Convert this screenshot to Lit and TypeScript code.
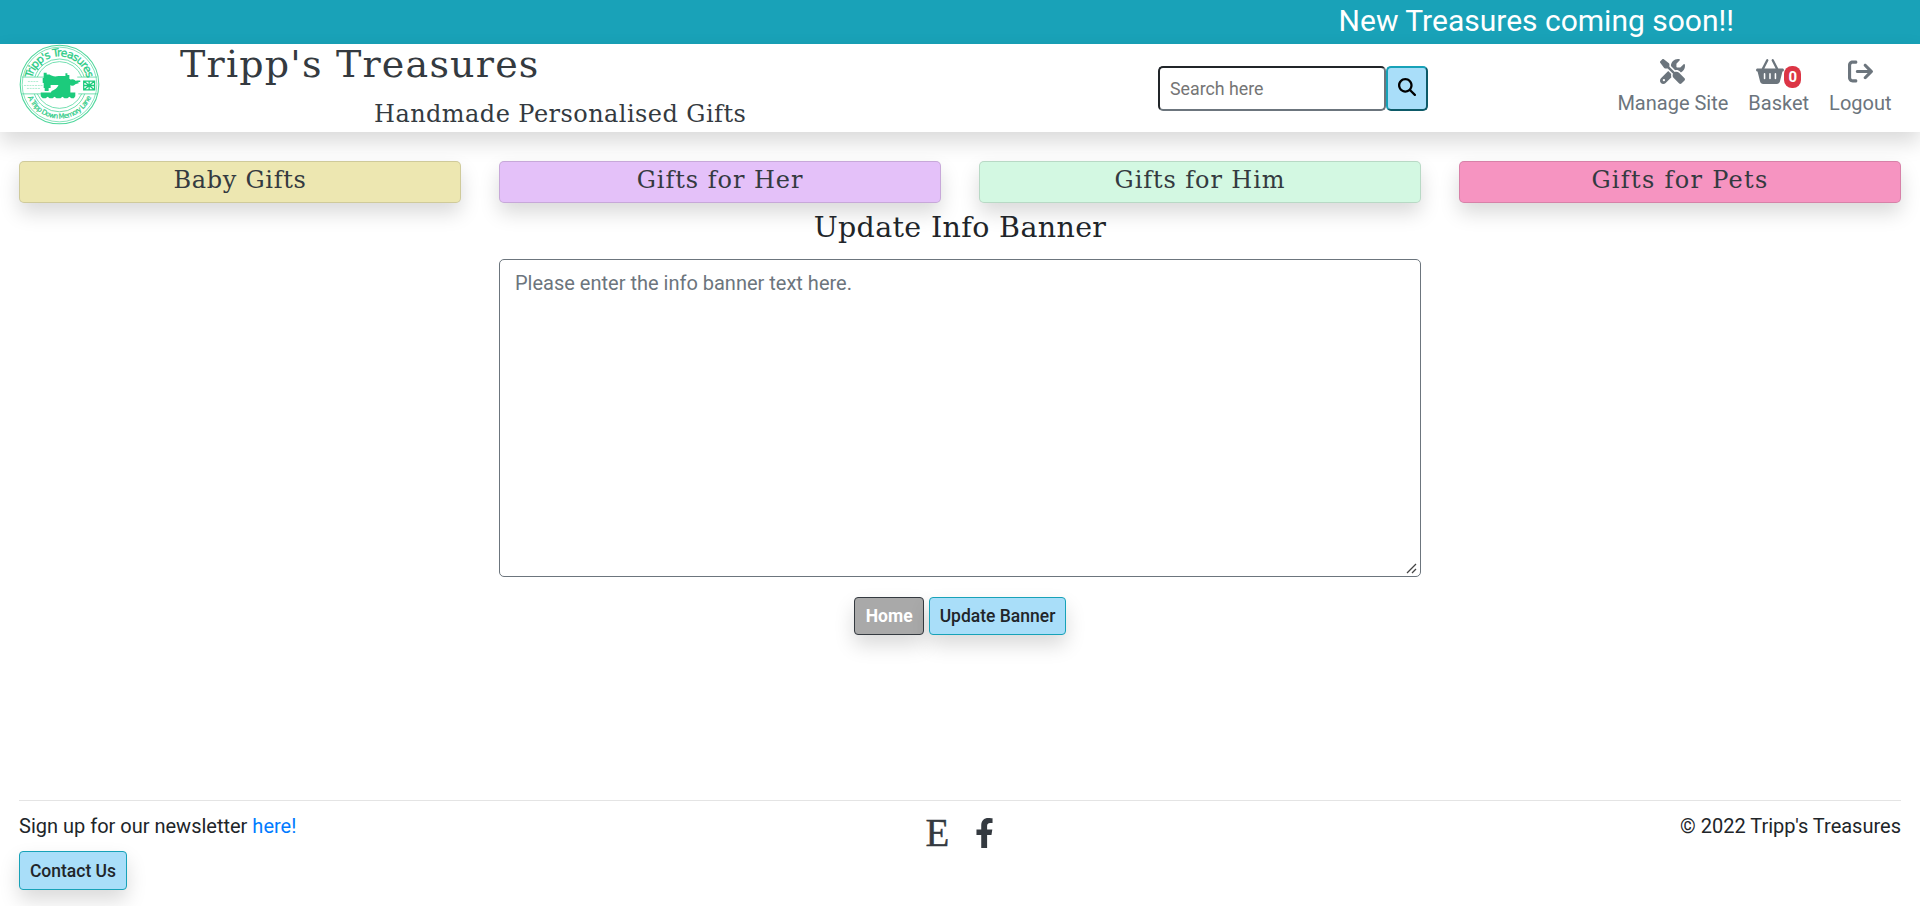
import { LitElement, html, css, svg } from "lit";
import { customElement } from "lit/decorators.js";

const ICONS = {
  tools:
    "M78.6 5C69.1-2.4 55.6-1.5 47 7L7 47c-8.5 8.5-9.4 22-2.1 31.6l80 104c4.5 5.9 11.6 9.4 19 9.4l54.1 0 109 109c-14.7 29-10 65.4 14.3 89.6l112 112c12.5 12.5 32.8 12.5 45.3 0l64-64c12.5-12.5 12.5-32.8 0-45.3l-112-112c-24.2-24.2-60.6-29-89.6-14.3l-109-109 0-54.1c0-7.5-3.5-14.5-9.4-19L78.6 5zM19.9 396.1C7.2 408.8 0 426.1 0 444.1C0 481.6 30.4 512 67.9 512c18 0 35.3-7.2 48-19.9L233.7 374.3c-7.8-20.9-9-43.6-3.6-65.1l-61.7-61.7L19.9 396.1zM512 144c0-10.5-1.1-20.7-3.2-30.5c-2.4-11.2-16.1-14.1-24.2-6l-63.9 63.9c-3 3-7.1 4.7-11.3 4.7L352 176c-8.8 0-16-7.2-16-16l0-57.4c0-4.2 1.7-8.3 4.7-11.3l63.9-63.9c8.1-8.1 5.2-21.8-6-24.2C388.7 1.1 378.5 0 368 0C288.5 0 224 64.5 224 144l0 .8 85.3 85.3c36-9.1 75.8 .5 104 28.7L429 274.5c49-23 83-72.8 83-130.5zM56 432a24 24 0 1 1 48 0 24 24 0 1 1 -48 0z",
  basket:
    "M253.3 35.1c6.1-11.8 1.5-26.3-10.2-32.4s-26.3-1.5-32.4 10.2L117.6 192 32 192c-17.7 0-32 14.3-32 32s14.3 32 32 32L83.9 463.5C91 492 116.6 512 146 512L430 512c29.4 0 55-20 62.1-48.5L544 256c17.7 0 32-14.3 32-32s-14.3-32-32-32l-85.6 0L365.3 12.9C359.2 1.2 344.7-3.4 332.9 2.7s-16.3 20.6-10.2 32.4L404.3 192l-232.6 0L253.3 35.1zM192 304l0 96c0 8.8-7.2 16-16 16s-16-7.2-16-16l0-96c0-8.8 7.2-16 16-16s16 7.2 16 16zm96-16c8.8 0 16 7.2 16 16l0 96c0 8.8-7.2 16-16 16s-16-7.2-16-16l0-96c0-8.8 7.2-16 16-16zm128 16l0 96c0 8.8-7.2 16-16 16s-16-7.2-16-16l0-96c0-8.8 7.2-16 16-16s16 7.2 16 16z",
  logout:
    "M502.6 278.6c12.5-12.5 12.5-32.8 0-45.3l-128-128c-12.5-12.5-32.8-12.5-45.3 0s-12.5 32.8 0 45.3L402.7 224 192 224c-17.7 0-32 14.3-32 32s14.3 32 32 32l210.7 0-73.4 73.4c-12.5 12.5-12.5 32.8 0 45.3s32.8 12.5 45.3 0l128-128zM160 96c17.7 0 32-14.3 32-32s-14.3-32-32-32L96 32C43 32 0 75 0 128L0 384c0 53 43 96 96 96l64 0c17.7 0 32-14.3 32-32s-14.3-32-32-32l-64 0c-17.7 0-32-14.3-32-32l0-256c0-17.7 14.3-32 32-32l64 0z",
  search:
    "M416 208c0 45.9-14.9 88.3-40 122.7L502.6 457.4c12.5 12.5 12.5 32.8 0 45.3s-32.8 12.5-45.3 0L330.7 376c-34.4 25.2-76.8 40-122.7 40C93.1 416 0 322.9 0 208S93.1 0 208 0S416 93.1 416 208zM208 352a144 144 0 1 0 0-288 144 144 0 1 0 0 288z",
  facebook:
    "M279.14 288l14.22-92.66h-88.91v-60.13c0-25.35 12.42-50.06 52.24-50.06h40.42V6.26S260.43 0 225.36 0c-73.22 0-121.08 44.38-121.08 124.72v70.62H22.89V288h81.39v224h100.17V288z",
};

const icon = (d: string, w: number, h: number, vw = 512) => html`<svg
  width=${w}
  height=${h}
  viewBox="0 0 ${vw} 512"
  fill="currentColor"
  aria-hidden="true"
>
  <path d=${d}></path>
</svg>`;

@customElement("shop-logo")
export class ShopLogo extends LitElement {
  static styles = css`
    :host { display: block; width: 81px; height: 81px; }
    svg { display: block; }
    .top { font: 11px "DejaVu Sans", sans-serif; fill: #27cb83; stroke: #27cb83; stroke-width: 0.3; }
    .bottom { font: 7px "DejaVu Sans", sans-serif; fill: #27cb83; stroke: #27cb83; stroke-width: 0.2; }
  `;
  render() {
    return html`<svg width="81" height="81" viewBox="0 0 82 82">
      ${svg`
      <defs>
        <path id="arcTop" d="M12.500 41 A28.500 28.500 0 0 1 69.500 41"></path>
        <path id="arcBottom" d="M6.500 41 A34.500 34.500 0 0 0 75.500 41"></path>
      </defs>
      <g fill="none" stroke="#4fd79c">
        <circle cx="41" cy="41" r="39.800" stroke-width="1.1"></circle>
        <circle cx="41" cy="41" r="37.800" stroke-width="0.7"></circle>
        <path d="M16 33.500 A26.200 26.200 0 0 1 66 33.500 M18.500 33.500 A24 24 0 0 1 63.500 33.500" stroke-width="0.8"></path>
        <path d="M15.500 50.500 A27 27 0 0 0 66.500 50.500 M18.500 50.500 A24.600 24.600 0 0 0 63.500 50.500" stroke-width="0.8"></path>
        <path d="M3 33.5H27M59 33.5H79M3 50.5H24M60 50.5H79" stroke-width="0.8"></path>
      </g>
      <g stroke="#a5ebcb" stroke-width="0.9" stroke-dasharray="2 0.8">
        <path d="M9 38H20M5 42H24M8 45H22"></path>
      </g>
      <text class="top"><textPath href="#arcTop" startOffset="50%" text-anchor="middle" textLength="77">Tripp's Treasures</textPath></text>
      <text class="bottom"><textPath href="#arcBottom" startOffset="50%" text-anchor="middle" textLength="82">A Tripp Down Memory Lane</textPath></text>
      <g fill="#1ccb7c">
        <path d="M25 29h3v2h3c2 2 6 2 9 1.500h7v-3h2v2h2v4h1v14h2v3H31l2-5c3-1 6-3 7-6h-8v3h-2v3h-4v-3h-1v-5h-1v-5h1z"></path>
        <path d="M22 49H57V53L55.500 55H53L51 53.500 49 55H46L44 53.500 42 55H38L36 53.500 34 55H31L29 53.500 27 55H24L22 53z"></path>
        <circle cx="54" cy="39" r="3.200"></circle>
        <path d="M56 36.500l5 3-5 1.500zM58 37h4v1.500h-4z"></path>
      </g>
      <g stroke="#1ccb7c" stroke-width="1.300" fill="none">
        <path d="M65.500 37.500h11v9h-11zM71 37.500v9M65.500 42h11M65.500 37.500l11 9M76.500 37.500l-11 9"></path>
      </g>`}
    </svg>`;
  }
}

@customElement("app-root")
export class AppRoot extends LitElement {
  static styles = css`
    :host {
      display: flex;
      flex-direction: column;
      height: 906px;
      overflow: hidden;
      box-sizing: border-box;
      background: #fff;
      color: #212529;
      font: 400 20px/30px Roboto, sans-serif;
    }
    * { box-sizing: border-box; }
    svg { display: block; }
    .typed { font-family: "DejaVu Serif", serif; font-weight: 400; margin: 0; white-space: nowrap; }
    .banner {
      height: 44px;
      flex: none;
      background: #19a2b8;
      color: #fff;
      font-size: 30px;
      line-height: 41px;
      padding-right: 186px;
      text-align: right;
    }
    header {
      height: 88px;
      flex: none;
      display: flex;
      align-items: flex-start;
      padding-left: 19px;
      box-shadow: 0 10px 20px rgba(0, 0, 0, 0.15);
    }
    .brand { display: block; width: 660px; padding-left: 80px; color: #343a40; }
    .brand-name { font-size: 38px; line-height: 40px; letter-spacing: 1.2px; }
    .tagline { font-size: 24px; line-height: 30px; padding: 15px 0 0 194px; letter-spacing: 0.45px; }
    .search { display: flex; margin: 22px 0 0 398px; }
    .search-input {
      width: 228px;
      height: 45px;
      border: 2px solid;
      border-color: #212529 #6c757d #6c757d #212529;
      border-radius: 5px;
      padding: 0 10px;
      font: 400 17.8px Roboto, sans-serif;
      background: #fff;
    }
    .search-input::placeholder, .message::placeholder { color: #6c757d; opacity: 1; }
    .search-input::placeholder { color: #757575; }
    .search-button {
      width: 42px;
      height: 45px;
      border: 2px solid;
      border-color: #17a2b8 #0d5a68 #0d5a68 #17a2b8;
      border-radius: 5px;
      background: #a9def9;
      color: #000;
      display: grid;
      place-items: center;
      padding: 0 0 3px;
    }
    .links { display: flex; gap: 20px; margin-left: auto; padding: 15px 28.5px 0 0; color: #6c757d; }
    .link { display: flex; flex-direction: column; align-items: center; }
    .link-icon { display: flex; height: 25px; align-items: center; margin-bottom: 4px; }
    .badge {
      background: #dc3545;
      color: #fff;
      font-size: 15px;
      font-weight: 700;
      line-height: 22px;
      width: 17px;
      height: 22px;
      border-radius: 8px;
      text-align: center;
      margin-top: 11px;
    }
    .categories {
      display: grid;
      grid-template-columns: repeat(4, 1fr);
      gap: 38px;
      padding: 29px 19px 0;
    }
    .category {
      height: 42px;
      border: 1px solid rgba(0, 0, 0, 0.125);
      border-radius: 5px;
      box-shadow: 0 10px 20px rgba(0, 0, 0, 0.15);
      color: #343a40;
      text-align: center;
      font-size: 24px;
      line-height: 36px;
    }
    .baby { background: #ede7b1; letter-spacing: 0.7px; }
    .her { background: #e4c1f9; letter-spacing: 0.95px; }
    .him { background: #d3f8e2; letter-spacing: 0.9px; }
    .pets { background: #f694c1; letter-spacing: 1.3px; }
    main { display: flex; flex-direction: column; align-items: center; }
    .title { font-size: 28.5px; line-height: 36px; margin: 7px 0 13px; letter-spacing: 0.35px; }
    .field { position: relative; width: 922px; height: 318px; }
    .message {
      display: block;
      width: 100%;
      height: 100%;
      resize: none;
      border: 1px solid #6c757d;
      border-radius: 5px;
      padding: 8px 15px;
      font: 400 20px/30px Roboto, sans-serif;
    }
    .grip { position: absolute; right: 4px; bottom: 3px; }
    .actions { display: flex; gap: 5px; margin-top: 20px; }
    .btn {
      height: 38px;
      border: 1px solid #17a2b8;
      border-radius: 4px;
      background: #a9def9;
      color: #212529;
      font: 500 17.500px/26px Roboto, sans-serif;
      padding: 0 9.5px;
      white-space: nowrap;
      box-shadow: 0 10px 20px rgba(0, 0, 0, 0.15);
    }
    .btn-home { background: #a9a9a9; color: #fff; border-color: #343a40; font-weight: 700; width: 70px; }
    footer {
      margin: auto 19px 0;
      height: 106px;
      border-top: 1px solid #e4e4e4;
      display: grid;
      grid-template-columns: 1fr 1fr 1fr;
      padding-top: 10px;
    }
    .signup-link { color: #007bff; text-decoration: none; }
    .contact { margin-top: 10px; width: 108px; height: 39px; display: block; }
    .social { display: flex; justify-content: center; gap: 26px; color: #343a40; padding-top: 7px; }
    .etsy { font: 39px/30px "Liberation Serif", serif; -webkit-text-stroke: 0.4px #343a40; }
    .copyright { text-align: right; }
  `;

  private categories = [
    ["baby", "Baby Gifts"],
    ["her", "Gifts for Her"],
    ["him", "Gifts for Him"],
    ["pets", "Gifts for Pets"],
  ];

  render() {
    return html`
      <div class="banner">New Treasures coming soon!!</div>
      <header>
        <shop-logo></shop-logo>
        <div class="brand">
          <h1 class="typed brand-name">Tripp's Treasures</h1>
          <p class="typed tagline">Handmade Personalised Gifts</p>
        </div>
        <div class="search">
          <input class="search-input" placeholder="Search here" />
          <button class="search-button" aria-label="Search">${icon(ICONS.search, 18, 18)}</button>
        </div>
        <nav class="links">
          <div class="link"><span class="link-icon">${icon(ICONS.tools, 25, 25)}</span>Manage Site</div>
          <div class="link">
            <span class="link-icon">${icon(ICONS.basket, 28, 25, 576)}<span class="badge">0</span></span>Basket
          </div>
          <div class="link"><span class="link-icon">${icon(ICONS.logout, 25, 25)}</span>Logout</div>
        </nav>
      </header>
      <nav class="categories">
        ${this.categories.map(([c, label]) => html`<div class="typed category ${c}">${label}</div>`)}
      </nav>
      <main>
        <h2 class="typed title">Update Info Banner</h2>
        <div class="field">
          <textarea class="message" placeholder="Please enter the info banner text here."></textarea>
          <svg class="grip" width="11" height="11" viewBox="0 0 11 11" stroke="#444" stroke-width="1.3">
            <path d="M1 10L10 1M6 10L10 6"></path>
          </svg>
        </div>
        <div class="actions">
          <button class="btn btn-home">Home</button>
          <button class="btn">Update Banner</button>
        </div>
      </main>
      <footer>
        <div>
          Sign up for our newsletter <a class="signup-link">here!</a>
          <button class="btn contact">Contact Us</button>
        </div>
        <div class="social"><span class="etsy">E</span>${icon(ICONS.facebook, 19, 30, 320)}</div>
        <div class="copyright">© 2022 Tripp's Treasures</div>
      </footer>
    `;
  }
}
